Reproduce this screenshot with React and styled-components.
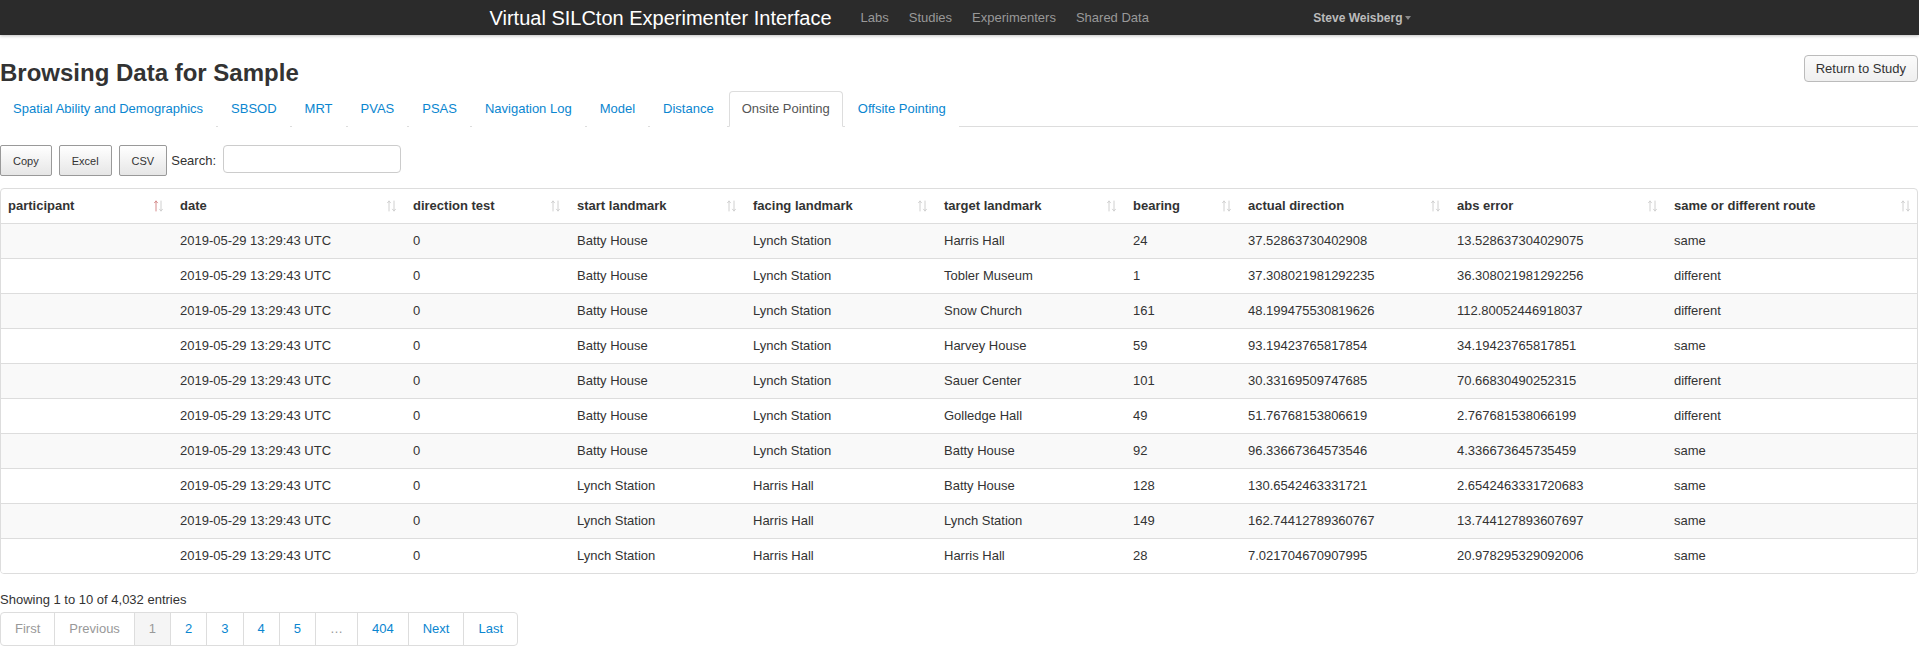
import styled, { createGlobalStyle } from 'styled-components'

const GlobalStyle = createGlobalStyle`
  html, body {
    margin: 0;
    padding: 0;
    background: #fff;
  }
  body {
    font-family: "Liberation Sans", Arial, Helvetica, sans-serif;
    font-size: 13px;
    line-height: 18px;
    color: #333;
  }
  * {
    box-sizing: border-box;
  }
`

// top bar
const NavBar = styled.header`
  height: 35px;
  background: #2b2b2b;
  box-shadow: 0 1px 3px rgba(0, 0, 0, 0.25);
`

const NavInner = styled.div`
  width: 940px;
  height: 100%;
  margin: 0 auto;
  display: flex;
  align-items: center;
`

const Brand = styled.a`
  font-size: 20px;
  color: #fff;
  margin-right: 19px;
  white-space: nowrap;
`

const NavLink = styled.a`
  font-size: 13px;
  color: #999;
  padding: 0 10px;
  white-space: nowrap;
`

const UserMenu = styled.a`
  margin-left: auto;
  margin-right: 19px;
  font-size: 12px;
  font-weight: bold;
  color: #bbb;
  display: flex;
  align-items: center;
  gap: 2px;
`

const Caret = styled.span`
  display: inline-block;
  width: 0;
  height: 0;
  margin-top: 1px;
  border-left: 3px solid transparent;
  border-right: 3px solid transparent;
  border-top: 4px solid #888;
`

const Page = styled.main`
  padding: 0 1px 0 0;
`

const HeaderRow = styled.div`
  display: flex;
  justify-content: space-between;
  align-items: flex-start;
  margin-top: 20px;
`

const Title = styled.h3`
  margin: 5px 0 0;
  font-size: 24px;
  line-height: 26px;
  font-weight: bold;
  color: #333;
`

const ReturnButton = styled.button`
  font-family: inherit;
  font-size: 13px;
  height: 27px;
  padding: 0 11px;
  color: #333;
  background: linear-gradient(#fbfbfb, #efefef);
  border: 1px solid #bbb;
  border-radius: 4px;
`

// tabs
const Tabs = styled.ul`
  list-style: none;
  margin: 5px 0 0;
  padding: 0;
  display: flex;
  border-bottom: 1px solid #ddd;
`

const Tab = styled.li`
  margin-bottom: -1px;
  margin-right: 2px;

  a {
    display: block;
    padding: 8px 12px;
    line-height: 18px;
    font-size: 13px;
    border: 1px solid ${({ $active }) => ($active ? '#ddd' : 'transparent')};
    border-bottom-color: ${({ $active }) => ($active ? '#fff' : 'transparent')};
    border-radius: 4px 4px 0 0;
    background: #fff;
    color: ${({ $active }) => ($active ? '#555' : '#0a86d0')};
    white-space: nowrap;
  }
`

// export buttons & search
const Toolbar = styled.div`
  display: flex;
  align-items: center;
  margin-top: 18px;
  height: 31px;
`

const ExportButton = styled.button`
  font-family: inherit;
  font-size: 11px;
  height: 31px;
  padding: 0 12px;
  margin-right: 7px;
  color: #333;
  background: linear-gradient(#ffffff, #e6e6e6);
  border: 1px solid #999;
  border-radius: 2px;
`

const SearchLabel = styled.label`
  display: flex;
  align-items: center;
  font-size: 13px;
  margin-left: -3px;

  input {
    width: 178px;
    height: 28px;
    margin-left: 7px;
    margin-top: -3px;
    border: 1px solid #ccc;
    border-radius: 4px;
    font-family: inherit;
  }
`

// data table
const TableBox = styled.div`
  margin-top: 12px;
  border: 1px solid #ddd;
  border-radius: 4px;
  overflow: hidden;
`

const Table = styled.table`
  width: 100%;
  table-layout: fixed;
  border-collapse: collapse;
`

const Th = styled.th`
  position: relative;
  text-align: left;
  font-weight: bold;
  font-size: 13px;
  line-height: 18px;
  padding: 8px 22px 8px 7px;
  white-space: nowrap;
`

const SortIcon = styled.svg`
  position: absolute;
  right: 10px;
  top: 11px;
`

const Row = styled.tr`
  background: ${({ $odd }) => ($odd ? '#f9f9f9' : '#fff')};
  border-top: 1px solid #ddd;
`

const Td = styled.td`
  padding: 8px 7px;
  line-height: 18px;
  font-size: 13px;
  white-space: nowrap;
  overflow: hidden;
`

const Info = styled.div`
  margin-top: 17px;
  font-size: 13px;
  line-height: 18px;
`

const Pager = styled.ul`
  list-style: none;
  display: flex;
  margin: 3px 0 0;
  padding: 0;
`

const PageItem = styled.li`
  margin-left: -1px;

  &:first-child {
    margin-left: 0;
    a { border-radius: 4px 0 0 4px; }
  }
  &:last-child a {
    border-radius: 0 4px 4px 0;
  }

  a {
    display: block;
    padding: 7px 14px;
    line-height: 18px;
    font-size: 13px;
    border: 1px solid #ddd;
    background: ${({ $active }) => ($active ? '#f5f5f5' : '#fff')};
    color: ${({ $muted }) => ($muted ? '#999' : '#0a86d0')};
  }
`

const columns = [
  { label: 'participant', width: 172, asc: true },
  { label: 'date', width: 233 },
  { label: 'direction test', width: 164 },
  { label: 'start landmark', width: 176 },
  { label: 'facing landmark', width: 191 },
  { label: 'target landmark', width: 189 },
  { label: 'bearing', width: 115 },
  { label: 'actual direction', width: 209 },
  { label: 'abs error', width: 217 },
  { label: 'same or different route', width: 253 },
]

const DATE = '2019-05-29 13:29:43 UTC'

const rows = [
  ['Batty House', 'Lynch Station', 'Harris Hall', '24', '37.52863730402908', '13.528637304029075', 'same'],
  ['Batty House', 'Lynch Station', 'Tobler Museum', '1', '37.308021981292235', '36.308021981292256', 'different'],
  ['Batty House', 'Lynch Station', 'Snow Church', '161', '48.199475530819626', '112.80052446918037', 'different'],
  ['Batty House', 'Lynch Station', 'Harvey House', '59', '93.19423765817854', '34.19423765817851', 'same'],
  ['Batty House', 'Lynch Station', 'Sauer Center', '101', '30.33169509747685', '70.66830490252315', 'different'],
  ['Batty House', 'Lynch Station', 'Golledge Hall', '49', '51.76768153806619', '2.767681538066199', 'different'],
  ['Batty House', 'Lynch Station', 'Batty House', '92', '96.33667364573546', '4.336673645735459', 'same'],
  ['Lynch Station', 'Harris Hall', 'Batty House', '128', '130.6542463331721', '2.6542463331720683', 'same'],
  ['Lynch Station', 'Harris Hall', 'Lynch Station', '149', '162.74412789360767', '13.744127893607697', 'same'],
  ['Lynch Station', 'Harris Hall', 'Harris Hall', '28', '7.021704670907995', '20.978295329092006', 'same'],
]

const tabs = [
  'Spatial Ability and Demographics', 'SBSOD', 'MRT', 'PVAS', 'PSAS',
  'Navigation Log', 'Model', 'Distance', 'Onsite Pointing', 'Offsite Pointing',
]

const pages = [
  { label: 'First', muted: true },
  { label: 'Previous', muted: true },
  { label: '1', muted: true, active: true },
  { label: '2' },
  { label: '3' },
  { label: '4' },
  { label: '5' },
  { label: '…', muted: true },
  { label: '404' },
  { label: 'Next' },
  { label: 'Last' },
]

const Sort = ({ asc }) => (
  <SortIcon width="9" height="12" viewBox="0 0 9 12">
    <g fill="none" strokeWidth="1" strokeLinecap="round">
      <path d="M2 11V1M0.5 2.8L2 1l1.5 1.8" stroke={asc ? '#d48a8a' : '#d0d0d0'} />
      <path d="M7 1v10M5.5 9.2L7 11l1.5-1.8" stroke="#d0d0d0" />
    </g>
  </SortIcon>
)

export default function App() {
  return (
    <>
      <GlobalStyle />
      <NavBar>
        <NavInner>
          <Brand>Virtual SILCton Experimenter Interface</Brand>
          <NavLink>Labs</NavLink>
          <NavLink>Studies</NavLink>
          <NavLink>Experimenters</NavLink>
          <NavLink>Shared Data</NavLink>
          <UserMenu>
            Steve Weisberg <Caret />
          </UserMenu>
        </NavInner>
      </NavBar>

      <Page>
        <HeaderRow>
          <Title>Browsing Data for Sample</Title>
          <ReturnButton>Return to Study</ReturnButton>
        </HeaderRow>

        <Tabs>
          {tabs.map((t) => (
            <Tab key={t} $active={t === 'Onsite Pointing'}>
              <a>{t}</a>
            </Tab>
          ))}
        </Tabs>

        <Toolbar>
          <ExportButton>Copy</ExportButton>
          <ExportButton>Excel</ExportButton>
          <ExportButton>CSV</ExportButton>
          <SearchLabel>
            Search:
            <input type="text" />
          </SearchLabel>
        </Toolbar>

        <TableBox>
          <Table>
            <colgroup>
              {columns.map((c) => (
                <col key={c.label} style={{ width: c.width }} />
              ))}
            </colgroup>
            <thead>
              <tr>
                {columns.map((c) => (
                  <Th key={c.label}>
                    {c.label}
                    <Sort asc={c.asc} />
                  </Th>
                ))}
              </tr>
            </thead>
            <tbody>
              {rows.map((r, i) => (
                <Row key={i} $odd={i % 2 === 0}>
                  <Td></Td>
                  <Td>{DATE}</Td>
                  <Td>0</Td>
                  {r.map((v, j) => (
                    <Td key={j}>{v}</Td>
                  ))}
                </Row>
              ))}
            </tbody>
          </Table>
        </TableBox>

        <Info>Showing 1 to 10 of 4,032 entries</Info>
        <Pager>
          {pages.map((p) => (
            <PageItem key={p.label} $muted={p.muted} $active={p.active}>
              <a>{p.label}</a>
            </PageItem>
          ))}
        </Pager>
      </Page>
    </>
  )
}
